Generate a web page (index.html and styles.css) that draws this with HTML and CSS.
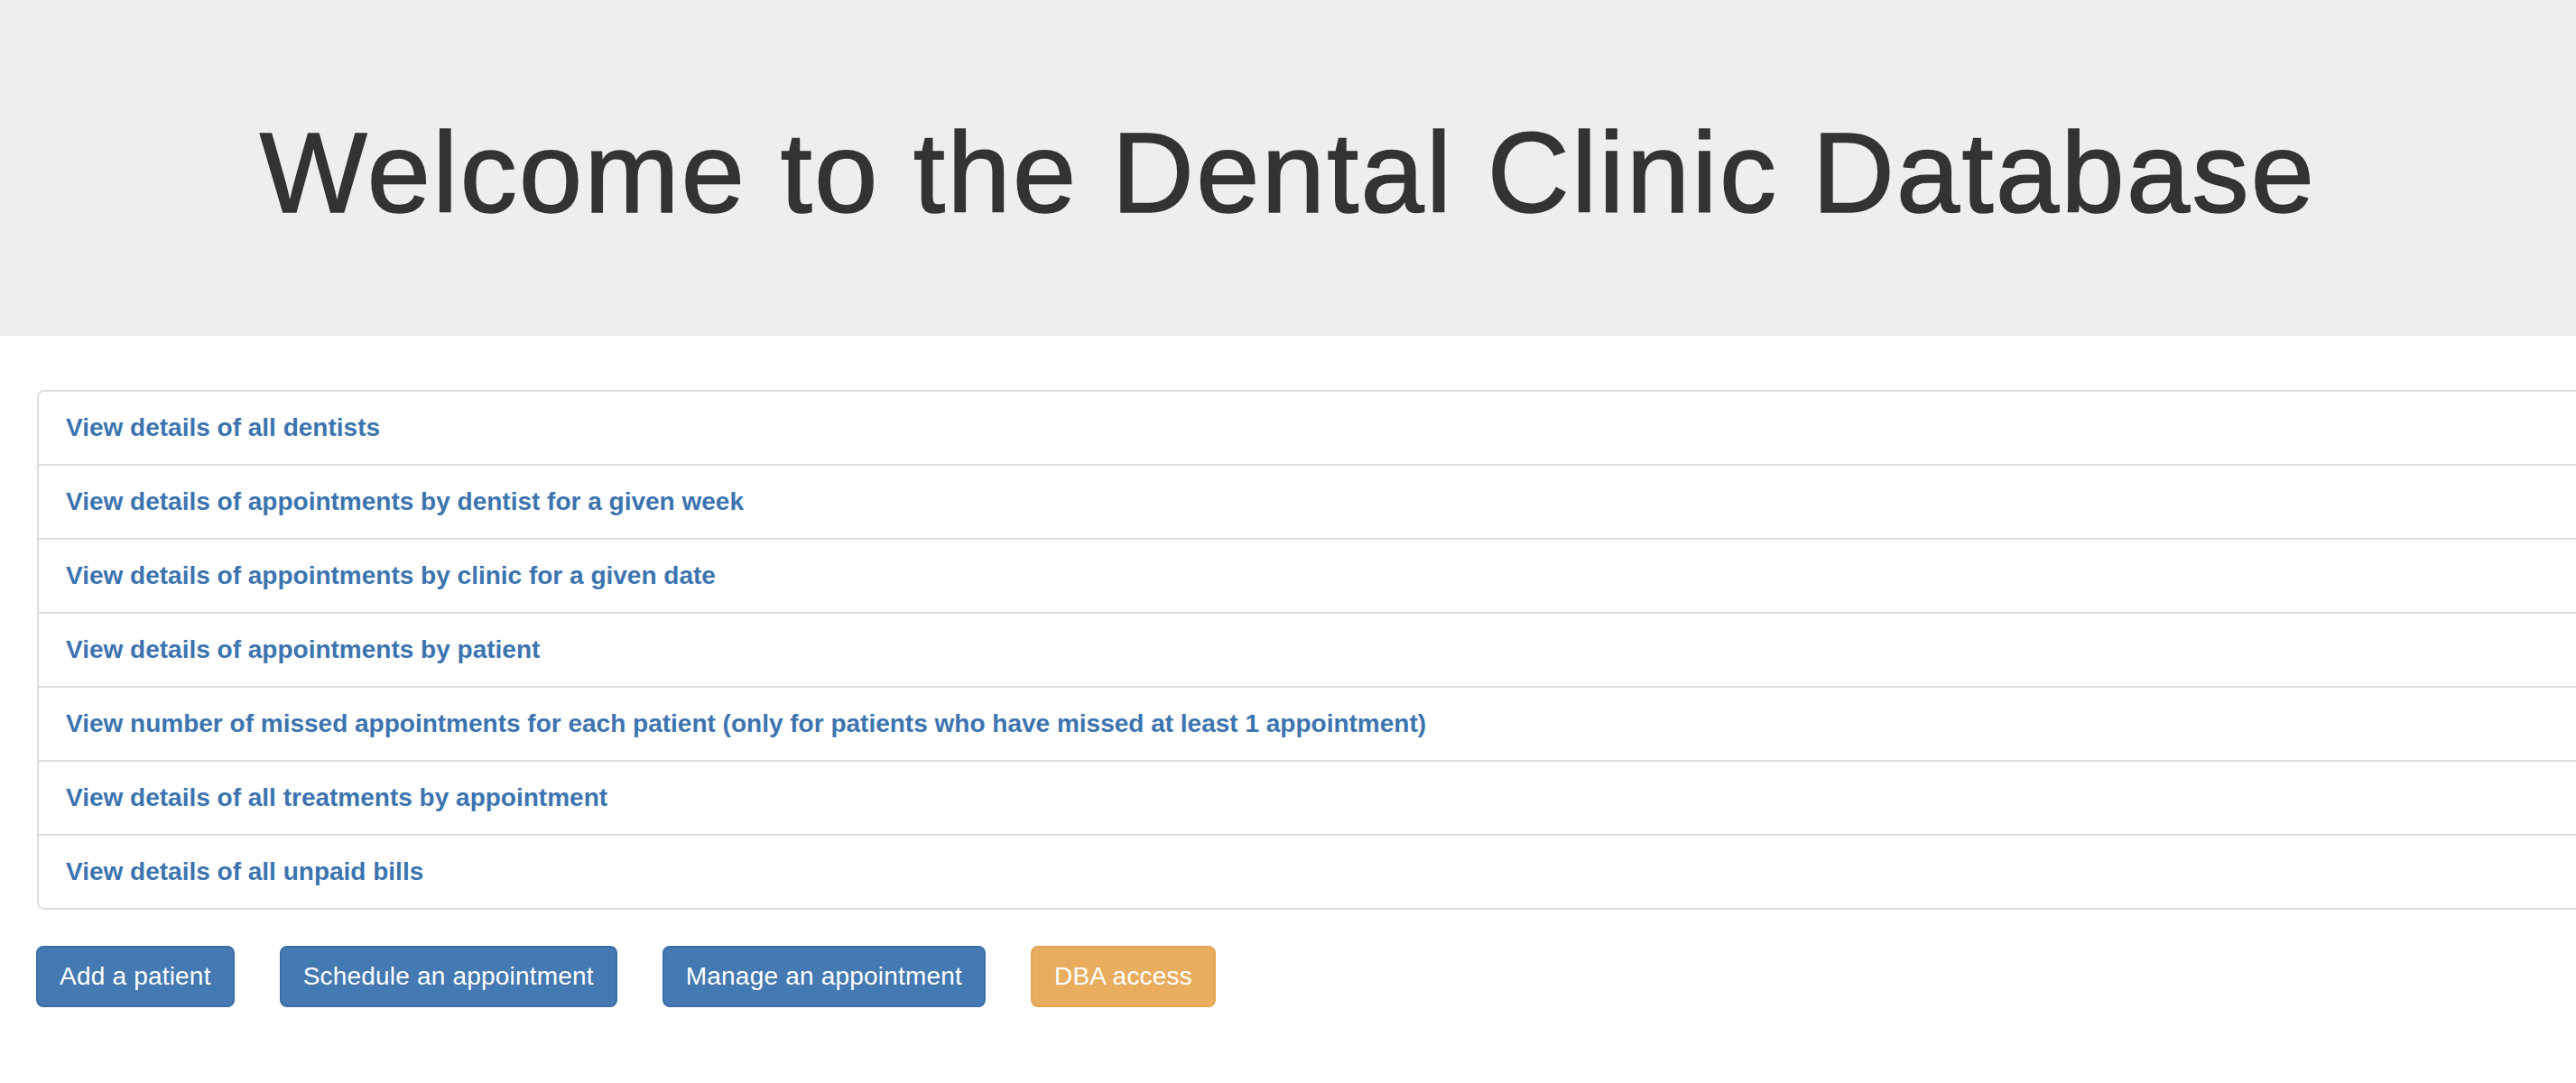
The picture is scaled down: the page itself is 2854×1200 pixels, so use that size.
FILE: index.html
```html
<!DOCTYPE html>
<html lang="en">
<head>
<meta charset="utf-8">
<title>Dental Clinic Database</title>
<link rel="stylesheet" href="styles.css">
</head>
<body>
<header class="jumbotron">
  <h1 class="title">Welcome to the Dental Clinic Database</h1>
</header>
<main class="content">
  <div class="list-group">
    <a class="list-item" href="#">View details of all dentists</a>
    <a class="list-item" href="#">View details of appointments by dentist for a given week</a>
    <a class="list-item" href="#">View details of appointments by clinic for a given date</a>
    <a class="list-item" href="#">View details of appointments by patient</a>
    <a class="list-item" href="#">View number of missed appointments for each patient (only for patients who have missed at least 1 appointment)</a>
    <a class="list-item" href="#">View details of all treatments by appointment</a>
    <a class="list-item" href="#">View details of all unpaid bills</a>
  </div>
  <div class="actions">
    <button class="btn btn-primary" type="button">Add a patient</button>
    <button class="btn btn-primary" type="button">Schedule an appointment</button>
    <button class="btn btn-primary" type="button">Manage an appointment</button>
    <button class="btn btn-warning" type="button">DBA access</button>
  </div>
</main>
</body>
</html>
```

FILE: styles.css
```css
html, body {
  margin: 0;
  padding: 0;
  overflow: hidden;
}

body {
  font-family: "Liberation Sans", Arial, Helvetica, sans-serif;
  font-size: 28px;
  line-height: 40px;
  color: #333333;
  background: #ffffff;
}

.jumbotron {
  background: #eeeeee;
  padding: 123px 0 110px;
  margin: 0 0 60px;
}

.title {
  margin: 0;
  font-size: 126px;
  font-weight: 400;
  line-height: 1.1;
  letter-spacing: 2.4px;
  text-align: center;
  color: #333333;
  -webkit-text-stroke: 1.6px #333333;
}

.content {
  padding-left: 41px;
}

.list-group {
  display: flex;
  flex-direction: column;
  margin: 0 -80px 40px 0;
}

.list-item {
  display: block;
  padding: 20px 30px;
  border: 2px solid #dddddd;
  margin-bottom: -2px;
  background: #ffffff;
  color: #3c74af;
  font-weight: 700;
  text-decoration: none;
}

.list-item:first-child {
  border-top-left-radius: 8px;
  border-top-right-radius: 8px;
}

.list-item:last-child {
  margin-bottom: 0;
  border-bottom-left-radius: 8px;
  border-bottom-right-radius: 8px;
}

.actions {
  display: flex;
  gap: 50px;
  margin-left: -1px;
}

.btn {
  font-family: "Liberation Sans", Arial, Helvetica, sans-serif;
  font-size: 28px;
  line-height: 40px;
  letter-spacing: 0.2px;
  padding: 12px 24px;
  border: 2px solid transparent;
  border-radius: 8px;
  color: #ffffff;
  cursor: pointer;
}

.btn-primary {
  background: #4479b1;
  border-color: #3d6ea4;
}

.btn-warning {
  background: #e8ad5f;
  border-color: #e4a553;
}
```
